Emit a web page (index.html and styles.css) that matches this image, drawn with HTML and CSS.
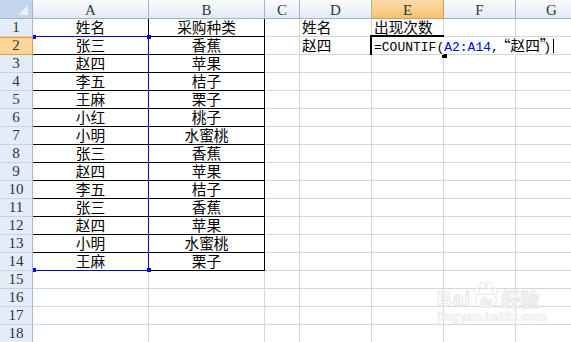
FILE: index.html
```html
<!DOCTYPE html>
<html lang="zh-CN">
<head>
<meta charset="utf-8">
<title>Sheet</title>
<link rel="stylesheet" href="styles.css">
</head>
<body>
<div class="sheet">
  <div class="row hdr">
    <div class="corner"><span class="tri"></span></div>
    <div class="ch wa">A</div>
    <div class="ch wb">B</div>
    <div class="ch wc">C</div>
    <div class="ch wd">D</div>
    <div class="ch we hsel">E</div>
    <div class="ch wf">F</div>
    <div class="ch wg">G</div>
  </div>
  <div class="row">
    <div class="rh">1</div>
    <div class="c wa ctr bd">姓名</div>
    <div class="c wb ctr bd">采购种类</div>
    <div class="c wc"></div>
    <div class="c wd">姓名</div>
    <div class="c we">出现次数</div>
    <div class="c wf"></div>
    <div class="c wg"></div>
  </div>
  <div class="row">
    <div class="rh rsel">2</div>
    <div class="c wa ctr bd">张三</div>
    <div class="c wb ctr bd">香蕉</div>
    <div class="c wc"></div>
    <div class="c wd">赵四</div>
    <div class="c we ovf"><span class="lat">=COUNTIF(</span><span class="lat ref">A2:A14</span><span class="lat">,</span><span class="ql">“</span>赵四<span class="qr">”</span><span class="lat">)</span><span class="caret"></span></div>
    <div class="c wf nor"></div>
    <div class="c wg nor"></div>
  </div>
  <div class="row">
    <div class="rh">3</div>
    <div class="c wa ctr bd">赵四</div>
    <div class="c wb ctr bd">苹果</div>
    <div class="c wc"></div><div class="c wd"></div><div class="c we"></div><div class="c wf"></div><div class="c wg"></div>
  </div>
  <div class="row">
    <div class="rh">4</div>
    <div class="c wa ctr bd">李五</div>
    <div class="c wb ctr bd">桔子</div>
    <div class="c wc"></div><div class="c wd"></div><div class="c we"></div><div class="c wf"></div><div class="c wg"></div>
  </div>
  <div class="row">
    <div class="rh">5</div>
    <div class="c wa ctr bd">王麻</div>
    <div class="c wb ctr bd">栗子</div>
    <div class="c wc"></div><div class="c wd"></div><div class="c we"></div><div class="c wf"></div><div class="c wg"></div>
  </div>
  <div class="row">
    <div class="rh">6</div>
    <div class="c wa ctr bd">小红</div>
    <div class="c wb ctr bd">桃子</div>
    <div class="c wc"></div><div class="c wd"></div><div class="c we"></div><div class="c wf"></div><div class="c wg"></div>
  </div>
  <div class="row">
    <div class="rh">7</div>
    <div class="c wa ctr bd">小明</div>
    <div class="c wb ctr bd">水蜜桃</div>
    <div class="c wc"></div><div class="c wd"></div><div class="c we"></div><div class="c wf"></div><div class="c wg"></div>
  </div>
  <div class="row">
    <div class="rh">8</div>
    <div class="c wa ctr bd">张三</div>
    <div class="c wb ctr bd">香蕉</div>
    <div class="c wc"></div><div class="c wd"></div><div class="c we"></div><div class="c wf"></div><div class="c wg"></div>
  </div>
  <div class="row">
    <div class="rh">9</div>
    <div class="c wa ctr bd">赵四</div>
    <div class="c wb ctr bd">苹果</div>
    <div class="c wc"></div><div class="c wd"></div><div class="c we"></div><div class="c wf"></div><div class="c wg"></div>
  </div>
  <div class="row">
    <div class="rh">10</div>
    <div class="c wa ctr bd">李五</div>
    <div class="c wb ctr bd">桔子</div>
    <div class="c wc"></div><div class="c wd"></div><div class="c we"></div><div class="c wf"></div><div class="c wg"></div>
  </div>
  <div class="row">
    <div class="rh">11</div>
    <div class="c wa ctr bd">张三</div>
    <div class="c wb ctr bd">香蕉</div>
    <div class="c wc"></div><div class="c wd"></div><div class="c we"></div><div class="c wf"></div><div class="c wg"></div>
  </div>
  <div class="row">
    <div class="rh">12</div>
    <div class="c wa ctr bd">赵四</div>
    <div class="c wb ctr bd">苹果</div>
    <div class="c wc"></div><div class="c wd"></div><div class="c we"></div><div class="c wf"></div><div class="c wg"></div>
  </div>
  <div class="row">
    <div class="rh">13</div>
    <div class="c wa ctr bd">小明</div>
    <div class="c wb ctr bd">水蜜桃</div>
    <div class="c wc"></div><div class="c wd"></div><div class="c we"></div><div class="c wf"></div><div class="c wg"></div>
  </div>
  <div class="row">
    <div class="rh">14</div>
    <div class="c wa ctr bd">王麻</div>
    <div class="c wb ctr bd">栗子</div>
    <div class="c wc"></div><div class="c wd"></div><div class="c we"></div><div class="c wf"></div><div class="c wg"></div>
  </div>
  <div class="row">
    <div class="rh">15</div>
    <div class="c wa"></div><div class="c wb"></div><div class="c wc"></div><div class="c wd"></div><div class="c we"></div><div class="c wf"></div><div class="c wg"></div>
  </div>
  <div class="row">
    <div class="rh">16</div>
    <div class="c wa"></div><div class="c wb"></div><div class="c wc"></div><div class="c wd"></div><div class="c we"></div><div class="c wf"></div><div class="c wg"></div>
  </div>
  <div class="row">
    <div class="rh">17</div>
    <div class="c wa"></div><div class="c wb"></div><div class="c wc"></div><div class="c wd"></div><div class="c we"></div><div class="c wf"></div><div class="c wg"></div>
  </div>
  <div class="row">
    <div class="rh">18</div>
    <div class="c wa"></div><div class="c wb"></div><div class="c wc"></div><div class="c wd"></div><div class="c we"></div><div class="c wf"></div><div class="c wg"></div>
  </div>

  <!-- range reference highlight A2:A14 -->
  <div class="refbox">
    <span class="h h-tl"></span><span class="h h-tr"></span>
    <span class="h h-bl"></span><span class="h h-br"></span>
  </div>
  <!-- active cell E2 (in edit mode) -->
  <div class="active"><span class="fill"></span></div>

  <!-- watermark -->
  <div class="wm">
    <div class="wm-top">
      <span class="wm-bai">Bai</span>
      <svg class="wm-paw" width="28" height="28" viewBox="0 0 28 28">
        <g fill="#fff" stroke="#e2e2e2" stroke-width="1">
          <ellipse cx="5" cy="10" rx="2.6" ry="3.2"/>
          <ellipse cx="10.5" cy="4.5" rx="2.8" ry="3.4"/>
          <ellipse cx="17.5" cy="4.5" rx="2.8" ry="3.4"/>
          <ellipse cx="23" cy="10" rx="2.6" ry="3.2"/>
          <rect x="3.5" y="13" width="21" height="13" rx="6.5"/>
        </g>
        <text x="14" y="23.5" text-anchor="middle" font-family="Liberation Sans, sans-serif" font-weight="bold" font-size="10" fill="#fff" stroke="#e2e2e2" stroke-width="0.7">du</text>
      </svg>
      <span class="wm-jy">经验</span>
    </div>
    <div class="wm-url">jingyan.baidu.com</div>
  </div>
</div>
</body>
</html>
```

FILE: styles.css
```css
html, body {
  margin: 0;
  padding: 0;
  background: #fff;
}
body {
  width: 571px;
  height: 342px;
  overflow: hidden;
  font-family: "Noto Sans CJK SC", sans-serif;
}
.sheet {
  position: relative;
  width: 571px;
  height: 342px;
  overflow: hidden;
}
.row {
  display: flex;
  height: 18px;
}
.row.hdr {
  height: 19px;
}
.c, .ch, .rh, .corner {
  box-sizing: border-box;
  flex: none;
  height: 100%;
}
.corner, .rh { width: 33px; }
.wa, .wb { width: 116px; }
.wc { width: 35px; }
.wd, .we, .wf, .wg { width: 72px; }

.corner {
  position: relative;
  background: #c3d5ec;
  border-right: 1px solid #9eb6ce;
  border-bottom: 1px solid #9eb6ce;
}
.tri {
  position: absolute;
  right: 4px;
  bottom: 3px;
  width: 10px;
  height: 10px;
  background: #e8eff8;
  clip-path: polygon(100% 0, 100% 100%, 0 100%);
}
.ch {
  border-right: 1px solid #9eb6ce;
  border-bottom: 1px solid #9eb6ce;
  background: linear-gradient(#f9fbfd 0%, #eef3f9 55%, #e2eaf4 100%);
  text-align: center;
  font-family: "Liberation Serif", serif;
  font-size: 15px;
  line-height: 18px;
  padding-top: 1px;
  color: #233b3b;
}
.ch.hsel {
  background: linear-gradient(#fbdca8 0%, #f8d08e 55%, #f4c274 100%);
  border-right-color: #f29536;
  border-bottom-color: #f29536;
}
.rh {
  border-right: 1px solid #9eb6ce;
  border-bottom: 1px solid #c5d4e6;
  background: #e4ecf7;
  text-align: center;
  font-family: "Liberation Serif", serif;
  font-size: 15px;
  line-height: 17px;
  color: #233b3b;
}
.rh.rsel {
  background: #fed798;
  border-right-color: #f29536;
  border-bottom-color: #f29536;
  box-shadow: inset 0 1px 0 #f29536;
}
.c {
  border-right: 1px solid #d0d7e5;
  border-bottom: 1px solid #d0d7e5;
  font-size: 14.67px;
  line-height: 16px;
  padding: 0 2px;
  white-space: nowrap;
  overflow: hidden;
  color: #000;
}
.ctr { text-align: center; }
.bd {
  border-right-color: #000;
  border-bottom-color: #000;
}
.ovf {
  overflow: visible;
  border-right-color: transparent;
  position: relative;
  z-index: 4;
}
.nor { border-right-color: transparent; }
.lat {
  font-family: "Liberation Mono", monospace;
  font-size: 13px;
}
.ref { color: #0000ff; }
.ql { margin-left: -3px; }
.qr { letter-spacing: -4px; }
.caret {
  display: inline-block;
  width: 1px;
  height: 14px;
  background: #000;
  margin-left: 2px;
  vertical-align: -2px;
}

.refbox {
  position: absolute;
  left: 33px;
  top: 36px;
  width: 116px;
  height: 235px;
  box-sizing: border-box;
  border: 1px solid #0000ff;
  border-left: 0;
  z-index: 3;
}
.h {
  position: absolute;
  width: 4px;
  height: 4px;
  background: #0000ff;
}
.h-tl { left: 0; top: -2px; width: 3px; }
.h-tr { right: -3px; top: -2px; }
.h-bl { left: 0; bottom: -2px; width: 3px; }
.h-br { right: -3px; bottom: -2px; }

.active {
  position: absolute;
  left: 370px;
  top: 35px;
  width: 74px;
  height: 20px;
  box-sizing: border-box;
  border-top: 2px solid #000;
  border-left: 2px solid #000;
  z-index: 3;
}
.fill {
  position: absolute;
  right: -3px;
  bottom: -3px;
  width: 5px;
  height: 4px;
  background: #000;
}

.wm {
  position: absolute;
  left: 437px;
  top: 281px;
  z-index: 5;
  pointer-events: none;
  opacity: 0.85;
}
.wm-top {
  display: flex;
  align-items: flex-end;
  gap: 1px;
}
.wm-bai {
  font-family: "Liberation Sans", sans-serif;
  font-weight: bold;
  font-size: 20px;
  line-height: 20px;
  letter-spacing: 1px;
  color: #fff;
  -webkit-text-stroke: 1px #e2e2e2;
}
.wm-paw { display: block; }
.wm-jy {
  font-family: "Noto Sans CJK SC", sans-serif;
  font-weight: bold;
  font-size: 19px;
  line-height: 20px;
  color: #fff;
  -webkit-text-stroke: 1px #e2e2e2;
}
.wm-url {
  margin-top: 2px;
  font-family: "Liberation Sans", sans-serif;
  font-weight: bold;
  font-size: 12px;
  line-height: 12px;
  letter-spacing: 0.3px;
  color: #fff;
  -webkit-text-stroke: 0.6px #e4e4e4;
}
```
